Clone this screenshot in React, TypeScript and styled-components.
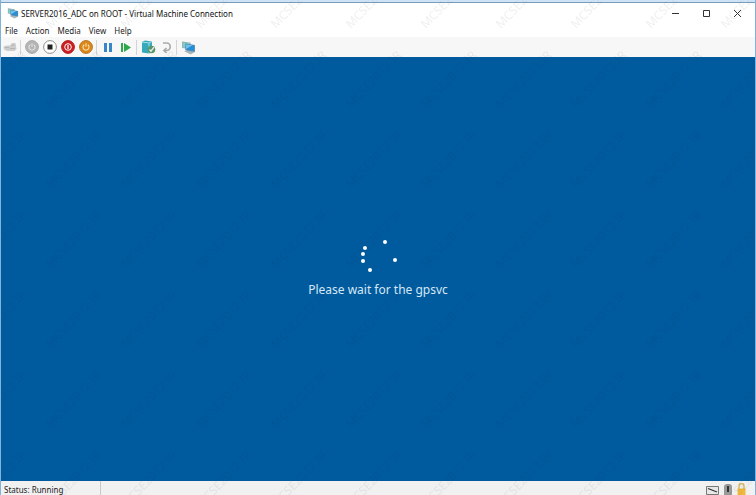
import React from 'react';
import styled, { createGlobalStyle } from 'styled-components';

const Global = createGlobalStyle`
  *, *::before, *::after { box-sizing: border-box; }
  html, body, #root { height: 100%; margin: 0; }
  body { overflow: hidden; font-family: "Noto Sans", sans-serif; font-size: 8px; color: #222; }
`;

const Window = styled.div`
  position: relative;
  display: flex;
  flex-direction: column;
  height: 100vh;
  background: #fff;
  border: solid #7fb3dc;
  border-width: 0 1px;
`;

const Backdrop = styled.div`
  height: 3px;
  flex: none;
  background: #cfe3f6;
  border-bottom: 1px solid #7d9cb8;
`;

const TitleBar = styled.header`
  display: flex;
  align-items: center;
  height: 20px;
  flex: none;
  padding-left: 6px;
  gap: 2px;
`;

const Title = styled.h1`
  flex: 1;
  margin: 0;
  font-size: 8px;
  font-weight: 400;
  color: #111;
  white-space: nowrap;
`;

const PlainButton = styled.button`
  display: flex;
  align-items: center;
  justify-content: center;
  padding: 0;
  border: 0;
  background: none;
  color: inherit;
  font: inherit;
`;

const Caption = styled(PlainButton)`
  width: 31px;
  height: 20px;
`;

const Captions = styled.div`
  display: flex;
  padding-right: 2px;
`;

const MenuBar = styled.nav`
  display: flex;
  flex: none;
  align-items: center;
  gap: 8px;
  height: 14px;
  padding-left: 4px;
`;

const ToolBar = styled.div`
  display: flex;
  flex: none;
  align-items: center;
  height: 20px;
  padding-left: 1px;
  gap: 2px;
  background: #f7f7f7;
`;

const Tool = styled(PlainButton)`
  width: 16px;
  height: 16px;
`;

const Separator = styled.span`
  width: 1px;
  height: 15px;
  margin-right: 1px;
  background: #d4d4d4;
`;

const Screen = styled.main`
  flex: 1;
  display: flex;
  flex-direction: column;
  align-items: center;
  justify-content: center;
  gap: 6px;
  background: #005a9e;
  color: #d6e8f5;
`;

const Message = styled.p`
  margin: 0;
  font-size: 12px;
  line-height: 20px;
`;

const StatusBar = styled.footer`
  display: flex;
  flex: none;
  align-items: flex-end;
  height: 14px;
  background: #f1f1f1;
  padding-right: 8px;
  gap: 2px;
`;

const Status = styled.div`
  width: 100px;
  padding: 3px 0 0 3px;
  line-height: 11px;
  border-right: 1px solid #c9c9c9;
  white-space: nowrap;
`;

const Spacer = styled.span`
  flex: 1;
`;

const Watermark = styled.svg`
  position: absolute;
  inset: 0;
  width: 100%;
  height: 100%;
  pointer-events: none;
`;

const Monitor = ({ size }: { size: number }) => (
  <svg width={size} height={size} viewBox="0 0 14 14" aria-hidden="true">
    <path d="M1 1.5 9 2.5v6L1 7.5z" fill="#9aa7ae" />
    <path d="M1.7 2.3 8.3 3.1v4.6L1.7 6.9z" fill="#79cfc9" />
    <path d="M3 10.5 7 9l6 2.2-4 2.3z" fill="#a8b4bb" />
    <path d="M4 3.2 13 4.6v6.6L4 9.6z" fill="#5f8cab" />
    <path d="M4.7 4.1 12.3 5.3v4.9L4.7 8.9z" fill="#278ed6" />
    <path d="m4.7 4.1 6 .9-6 3.5z" fill="#70c2ef" />
  </svg>
);

const Disc = ({ ring, fill, children }: { ring: string; fill: string; children: React.ReactNode }) => (
  <svg width="14" height="14" viewBox="0 0 14 14" aria-hidden="true">
    <circle cx="7" cy="7" r="6.4" fill={fill} stroke={ring} />
    {children}
  </svg>
);

const PowerMark = ({ color }: { color: string }) => (
  <path d="M5.2 4.8a3 3 0 1 0 3.6 0M7 3.2v3.5" fill="none" stroke={color} strokeWidth="1.1" />
);

const menus = ['File', 'Action', 'Media', 'View', 'Help'];
const dots = [[26, 4], [6, 10], [4, 16], [4, 23], [11, 32], [36, 22]];

export default function App() {
  return (
    <Window>
      <Global />
      <Backdrop />
      <TitleBar>
        <Monitor size={12} />
        <Title>SERVER2016_ADC on ROOT - Virtual Machine Connection</Title>
        <Captions>
          <Caption aria-label="Minimize">
            <svg width="9" height="9"><path d="M1 4.5h7" stroke="#333" /></svg>
          </Caption>
          <Caption aria-label="Maximize">
            <svg width="9" height="9"><path d="M1.5 1.5h6v6h-6z" fill="none" stroke="#333" /></svg>
          </Caption>
          <Caption aria-label="Close">
            <svg width="9" height="9"><path d="m1 1 7 7M8 1 1 8" stroke="#333" /></svg>
          </Caption>
        </Captions>
      </TitleBar>
      <MenuBar>
        {menus.map((name) => <PlainButton key={name}>{name}</PlainButton>)}
      </MenuBar>
      <ToolBar role="toolbar">
        <Tool aria-label="Ctrl+Alt+Delete">
          <svg width="14" height="10" viewBox="0 0 14 10">
            <path d="M.5 4.5 4 3.5h3L9 1h3.5l1 6-2 2H4L1 7.5z" fill="#cdcdcd" />
            <path d="M2 5.5h4M8.5 3.5l3-.5M7 6.5h5" stroke="#b4b4b4" fill="none" />
          </svg>
        </Tool>
        <Separator />
        <Tool aria-label="Start"><Disc ring="#a8a8a8" fill="#b5b5b5"><PowerMark color="#dedede" /></Disc></Tool>
        <Tool aria-label="Turn off"><Disc ring="#8e8e8e" fill="#fff"><path d="M4.5 4.5h5v5h-5z" fill="#222" /></Disc></Tool>
        <Tool aria-label="Shut down">
          <Disc ring="#b32023" fill="#cc1d20">
            <circle cx="7" cy="7" r="3.3" fill="none" stroke="#fff" />
            <path d="M7 5v4" stroke="#fff" strokeWidth="1.3" />
          </Disc>
        </Tool>
        <Tool aria-label="Save"><Disc ring="#b87320" fill="#dc8718"><PowerMark color="#fbe0b4" /></Disc></Tool>
        <Separator />
        <Tool aria-label="Pause">
          <svg width="12" height="12"><path d="M2 2h3v9H2zM7 2h3v9H7z" fill="#3a85c8" /></svg>
        </Tool>
        <Tool aria-label="Reset">
          <svg width="12" height="12"><path d="M1 2h2v9H1zM4 2l7 4.5L4 11z" fill="#2fa84a" /></svg>
        </Tool>
        <Separator />
        <Tool aria-label="Checkpoint">
          <svg width="15" height="14" viewBox="0 0 15 14">
            <path d="M1 2 4 .5l7 1V12l-3 1.5-7-1z" fill="#36a9ba" />
            <path d="m1 2 7 1v10.5M8 3l3-1.5" stroke="#a2dfe4" fill="none" />
            <circle cx="10.5" cy="9.5" r="3.8" fill="#59966a" />
            <path d="m8.5 9.5 1.5 1.7 3-4" stroke="#eee" fill="none" strokeWidth="1.3" />
          </svg>
        </Tool>
        <Tool aria-label="Revert">
          <svg width="12" height="12"><path d="M3 2h3.5a3.4 3.4 0 0 1 0 7.5H4.5M6.5 7 4 9.5 6.5 12" fill="none" stroke="#aaa" strokeWidth="1.7" /></svg>
        </Tool>
        <Separator />
        <Tool aria-label="Enhanced session"><Monitor size={15} /></Tool>
      </ToolBar>
      <Screen>
        <svg width="38" height="36" aria-hidden="true">
          {dots.map(([x, y]) => <circle key={`${x}-${y}`} cx={x} cy={y} r="2" fill="#fff" />)}
        </svg>
        <Message>Please wait for the gpsvc</Message>
      </Screen>
      <StatusBar>
        <Status>Status: Running</Status>
        <Spacer />
        <svg width="13" height="10" viewBox="0 0 13 10"><path d="M.5 1.5h12v8H.5z" fill="#e8e8e8" stroke="#777" /><path d="m2 3.5 9 3.5" stroke="#333" strokeWidth="1.3" /></svg>
        <svg width="13" height="12"><rect x="3" y="1" width="8" height="13" rx="3" fill="#999" /><path d="M7 3v6" stroke="#333" strokeWidth="2" /></svg>
        <svg width="11" height="12"><path d="M3 6V3a2.5 2.5 0 0 1 5 0v3" fill="none" stroke="#d8b866" strokeWidth="1.5" /><path d="M1.5 5.5h8V12h-8z" fill="#f0b83c" /></svg>
      </StatusBar>
      <Watermark aria-hidden="true">
        <defs>
          <pattern id="mark" width="75" height="80" patternUnits="userSpaceOnUse">
            {[-25, 50].map((x) => [29, 109].map((y) => (
              <text key={`${x}-${y}`} x={x} y={y} transform={`rotate(-46 ${x} ${y})`} fontSize="12" fill="#0c1c2c" fillOpacity=".07">MCSE2012.IR</text>
            )))}
          </pattern>
        </defs>
        <rect width="100%" height="100%" fill="url(#mark)" />
      </Watermark>
    </Window>
  );
}
